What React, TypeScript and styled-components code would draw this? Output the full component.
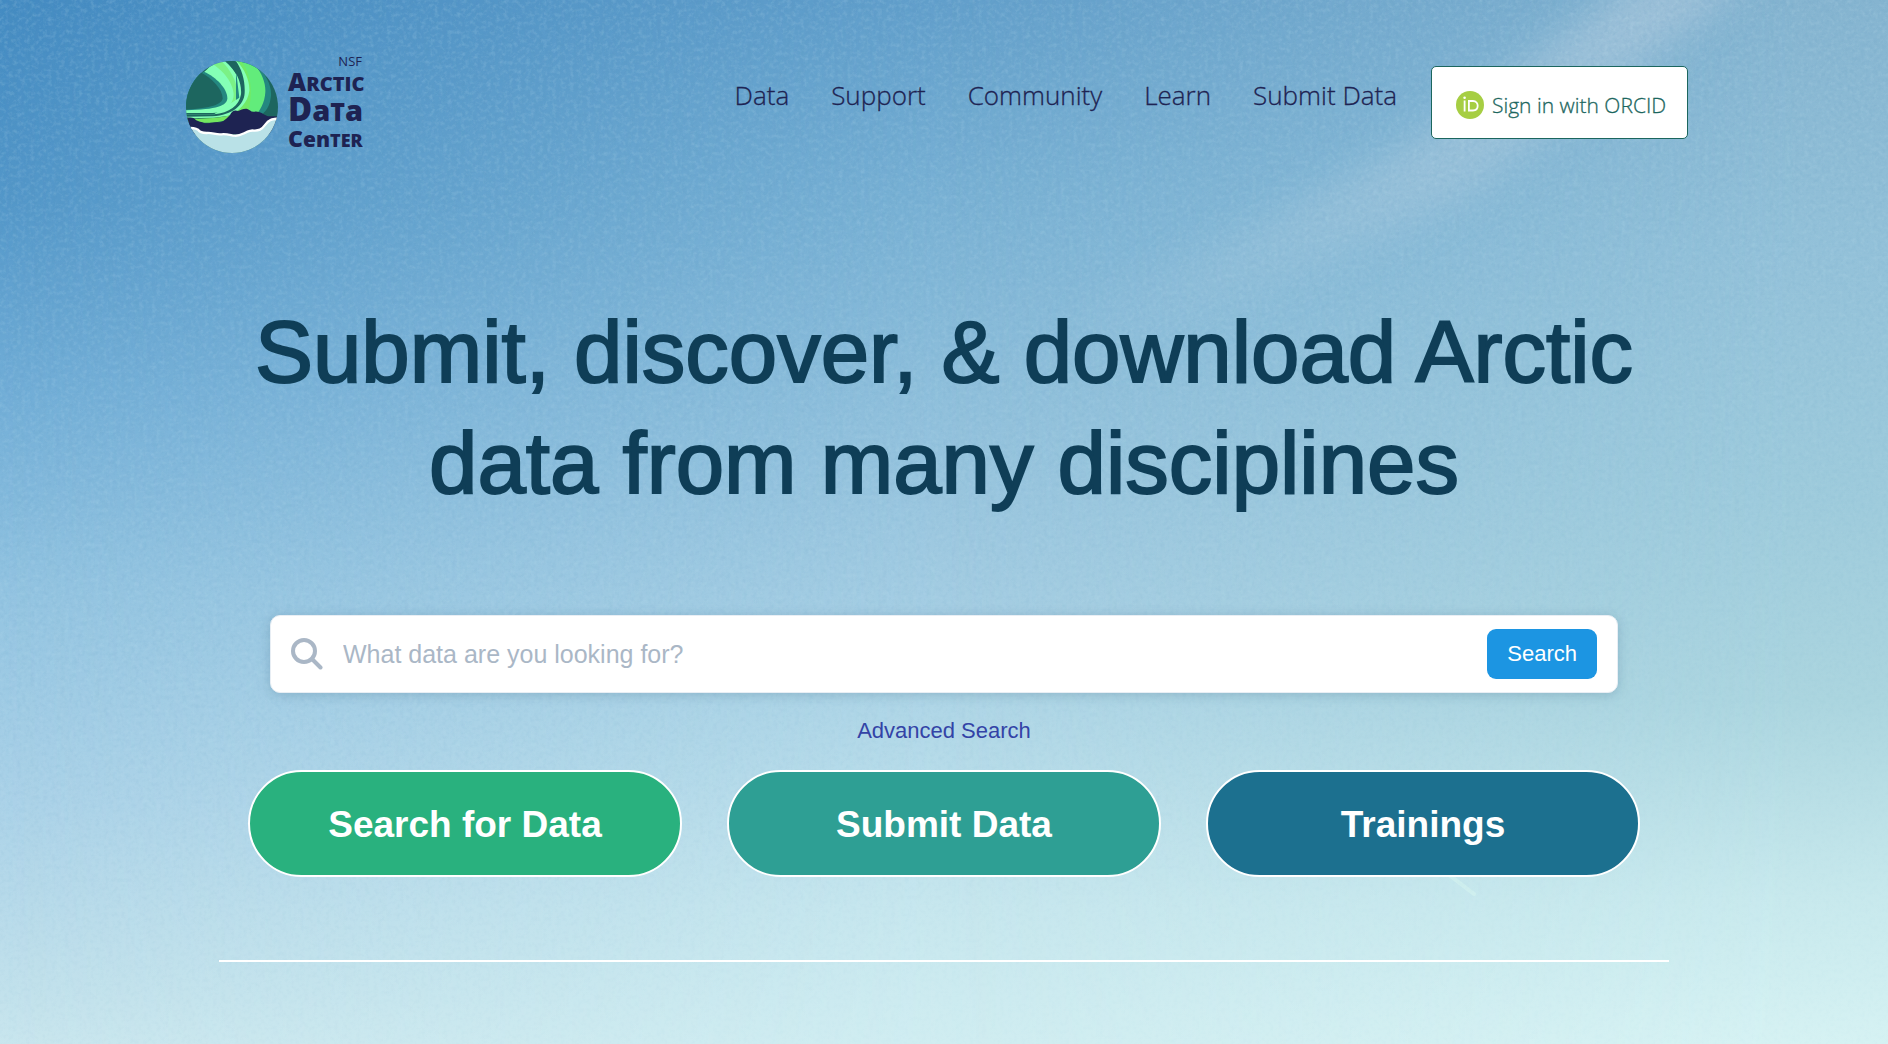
import React from "react";
import styled, { createGlobalStyle } from "styled-components";

const GlobalStyle = createGlobalStyle`
  *, *::before, *::after { box-sizing: border-box; }
  body {
    margin: 0;
    font-family: "Liberation Sans", Arial, Helvetica, sans-serif;
    background: #9ecbe2;
  }
`;

const Page = styled.div`
  position: relative;
  isolation: isolate;
  min-height: 100vh;
  padding-bottom: 40px;
  overflow: hidden;
`;

const Sky = styled.div`
  position: absolute;
  inset: 0;
  z-index: -1;
  background: linear-gradient(#448bc2, #5397c9 19%, #72aed7 38%, #93c4e1 57%, #abd2e8 77%, #c3e2ec 96%, #c9e6ee);

  &::before,
  &::after {
    content: "";
    position: absolute;
    inset: 0;
  }
  &::before {
    background: linear-gradient(#629fcb, #79b1d4 19%, #8fbfdb 38%, #a3cce2 57%, #b3d9e8 71%, #c7e7ee 87%, #d0edf1);
    mask-image: linear-gradient(90deg, transparent, #000 50%);
  }
  &::after {
    background: linear-gradient(#85b4d0, #93c1d9 24%, #9ecbdc 48%, #abd5df 67%, #c8e9ed 86%, #d6f2f3);
    mask-image: linear-gradient(90deg, transparent 50%, #000 95%);
  }
`;

const Texture = styled.svg`
  position: absolute;
  inset: 0;
  z-index: 1;
  width: 100%;
  height: 100%;
`;

const Header = styled.header`
  display: flex;
  align-items: flex-start;
  justify-content: space-between;
  max-width: 1516px;
  margin: 0 auto;
  padding: 52px 14px 0 0;
`;

const LogoLink = styled.a`
  display: block;
  svg { display: block; width: 184px; height: 102px; }
`;

const Nav = styled.nav`
  display: flex;
  align-items: flex-start;
  gap: 34px;
  padding-top: 14px;
  font-family: "Open Sans", "Noto Sans", sans-serif;
  font-weight: 300;
`;

const NavList = styled.ul`
  display: flex;
  gap: 42px;
  margin: 0;
  padding: 9px 0 0;
  list-style: none;
`;

const NavLink = styled.a`
  color: #1e2352;
  font-size: 26px;
  line-height: 40px;
  text-decoration: none;
  -webkit-text-stroke: 0.3px;
`;

const SignIn = styled.a`
  display: flex;
  align-items: center;
  gap: 8px;
  min-width: 257px;
  height: 73px;
  padding: 4px 18px 0 24px;
  border: 1px solid #1b665e;
  border-radius: 5px;
  background: #fff;
  color: #1b665e;
  font-size: 21px;
  line-height: 28px;
  text-decoration: none;
  -webkit-text-stroke: 0.3px;
  svg { width: 28px; height: 28px; }
`;

const Main = styled.main`
  max-width: 1450px;
  margin: 142px auto 0;
`;

const Title = styled.h1`
  margin: 0;
  color: #0f3e57;
  font-size: 87px;
  font-weight: 400;
  line-height: 111px;
  text-align: center;
  -webkit-text-stroke: 2px #0f3e57;
`;

const SearchForm = styled.form`
  display: flex;
  align-items: center;
  height: 78px;
  margin: 97px 51px 0;
  padding: 0 20px;
  border: 1px solid #e8eef4;
  border-radius: 10px;
  background: #fff;
  box-shadow: 0 2px 12px rgba(40, 80, 110, 0.22);
`;

const SearchLabel = styled.label`
  display: flex;
  color: #aab7c6;
  svg { width: 32px; height: 32px; }
`;

const SearchInput = styled.input`
  flex: 1;
  min-width: 0;
  height: 50px;
  padding: 0 20px;
  border: 0;
  outline: 0;
  background: transparent;
  color: #22313f;
  font: inherit;
  font-size: 25px;
  &::placeholder { color: #aab7c6; opacity: 1; }
`;

const SearchButton = styled.button`
  height: 50px;
  padding: 0 20px;
  border: 0;
  border-radius: 9px;
  background: #1c95e2;
  color: #fff;
  font: inherit;
  font-size: 22px;
`;

const AdvancedLink = styled.a`
  display: block;
  width: fit-content;
  margin: 23px auto 24px;
  color: #3343a6;
  font-size: 22px;
  line-height: 30px;
  text-decoration: none;
`;

const Actions = styled.div`
  display: grid;
  grid-template-columns: repeat(3, 1fr);
  gap: 45px;
  padding: 0 29px;
`;

const ActionLink = styled.a<{ $color: string }>`
  display: flex;
  align-items: center;
  justify-content: center;
  height: 107px;
  padding-top: 2px;
  border: 2px solid #fff;
  border-radius: 54px;
  background: ${(p) => p.$color};
  color: #fff;
  font-size: 37px;
  font-weight: 700;
  text-decoration: none;
`;

const Divider = styled.hr`
  height: 2px;
  margin: 83px 0 0;
  border: 0;
  background: #fff;
`;

const links = ["Data", "Support", "Community", "Learn", "Submit Data"];

const actions = [
  { label: "Search for Data", color: "#29b17e" },
  { label: "Submit Data", color: "#2e9f94" },
  { label: "Trainings", color: "#1c708f" },
];

function Logo() {
  return (
    <svg viewBox="0 0 184 102" role="img" aria-label="NSF Arctic Data Center">
      <defs>
        <clipPath id="globe"><circle cx="138" cy="138" r="138" /></clipPath>
      </defs>
      <g transform="translate(0 9) scale(.3333)">
        <g clipPath="url(#globe)">
          <rect width="276" height="276" fill="#1d665f" />
          <path d="M48 38 L62 26 C80 8 94 0 108 -6 C150 22 166 66 166 98 C164 132 130 152 80 156 L0 156 L0 146 Z" fill="#84ffb6" />
          <path d="M100 -5 C126 16 154 56 154 98 C152 128 132 142 104 150 C130 140 144 120 143 98 C140 60 106 24 78 8 Z" fill="#74e65f" opacity=".55" />
          <path d="M54 32 C90 48 124 82 124 112 C124 134 92 146 0 148 L0 60 Z" fill="#248880" />
          <path d="M44 34 C78 52 110 86 110 112 C108 130 76 142 0 146 L0 60 Z" fill="#1d665f" />
          <path d="M186 -4 C230 20 262 70 254 112 C250 150 220 172 190 178 L150 178 L150 -5 Z" fill="#248880" />
          <path d="M150 -5 L186 -5 C222 20 240 60 238 94 C236 130 218 156 196 178 L120 178 L170 130 Z" fill="#62ec7b" />
          <path d="M160 -5 C196 30 206 100 180 176 L130 176 L178 110 Z" fill="#77e95e" opacity=".7" />
          <path d="M146 -5 C176 20 192 60 190 90 C186 124 160 150 130 164 L84 170 L0 172 L0 160 L84 160 L160 110 Z" fill="#84ffb6" />
          <path d="M112 -5 C152 26 168 66 165 100 C160 134 130 156 84 160 L0 160 L0 167 L80 166 C140 162 174 132 176 96 C178 56 166 20 146 -5 Z" fill="#1d665f" />
          <path d="M0 172 C60 175 105 171 142 160 L132 178 L90 188 L0 182 Z" fill="#74e65f" />
          <path d="M40 184 C70 188 96 184 128 176 L120 190 L50 190 Z" fill="#1d665f" />
          <path d="M-4 168 C8 170 16 168 24 172 C32 182 44 182 54 186 C66 190 78 182 96 184 C110 186 122 172 132 162 C138 148 148 146 156 150 C166 148 172 142 184 144 C192 146 194 154 206 152 C222 150 230 160 242 164 C254 168 264 164 280 168 L280 220 L0 220 Z" fill="#1e2352" />
          <path d="M0 200 C14 200 26 200 36 206 C42 216 54 216 62 216 C78 214 90 222 106 220 C120 218 132 222 146 224 C162 226 176 214 192 210 C200 206 208 212 222 206 C236 200 240 182 252 178 C262 172 270 176 280 170 L280 280 L0 280 Z" fill="#b9e1e7" stroke="#fff" strokeWidth="7" />
        </g>
      </g>
      <g fill="#1e2352" fontFamily='"Open Sans", "Noto Sans", sans-serif' fontWeight="800">
        <text x="176" y="14" textAnchor="end" fontSize="13" fontWeight="400">NSF</text>
        <text x="102" y="39" fontSize="25">A<tspan fontSize="20">RCTIC</tspan></text>
        <text x="102" y="69" fontSize="33">D<tspan fontSize="29">a</tspan><tspan fontSize="25">T</tspan><tspan fontSize="29">a</tspan></text>
        <text x="102" y="95" fontSize="23">C<tspan fontSize="21">en</tspan><tspan fontSize="18">TER</tspan></text>
      </g>
    </svg>
  );
}

function OrcidIcon() {
  return (
    <svg viewBox="0 0 28 28" aria-hidden="true">
      <circle cx="14" cy="14" r="14" fill="#a6ce43" />
      <circle cx="8.6" cy="6.7" r="1.3" fill="#fff" />
      <path d="M8.6 9.6 V20.4 M12.9 10 H17 C20.2 10 21.7 12.4 21.7 14.8 C21.7 17.4 20 19.5 17 19.5 H12.9 Z" fill="none" stroke="#fff" strokeWidth="1.8" />
    </svg>
  );
}

function Backdrop() {
  return (
    <Sky aria-hidden="true">
      <Texture viewBox="0 0 1888 1044" preserveAspectRatio="none">
        <defs>
          <filter id="haze" x="-20%" y="-20%" width="140%" height="140%">
            <feGaussianBlur stdDeviation="18" />
          </filter>
          <filter id="grain" x="0" y="0" width="100%" height="100%">
            <feTurbulence type="fractalNoise" baseFrequency="0.23" numOctaves="3" seed="4" />
            <feColorMatrix values="0 0 0 0 0.1  0 0 0 0 0.3  0 0 0 0 0.5  1.6 0 0 0 -0.7" />
          </filter>
          <filter id="glint" x="0" y="0" width="100%" height="100%">
            <feTurbulence type="fractalNoise" baseFrequency="0.23" numOctaves="3" seed="11" />
            <feColorMatrix values="0 0 0 0 0.75  0 0 0 0 0.95  0 0 0 0 1  1.6 0 0 0 -0.7" />
          </filter>
          <linearGradient id="fade" x1="0" y1="0" x2="0.4" y2="1">
            <stop offset="0" stopColor="#fff" />
            <stop offset="0.6" stopColor="#888" />
            <stop offset="1" stopColor="#222" />
          </linearGradient>
          <mask id="grainMask"><rect width="1888" height="1044" fill="url(#fade)" /></mask>
          <linearGradient id="beam" x1="1" y1="0" x2="0" y2="1">
            <stop offset="0" stopColor="#adc8dd" stopOpacity="0.7" />
            <stop offset="0.5" stopColor="#a5c7dc" stopOpacity="0.55" />
            <stop offset="1" stopColor="#a3c9df" stopOpacity="0" />
          </linearGradient>
        </defs>
        <path d="M1640 -20 L1750 -20 L1460 200 L1090 370 L1070 320 L1400 150 Z" fill="url(#beam)" filter="url(#haze)" />
        <path d="M1440 868 L1474 894" stroke="#d5f4f0" strokeWidth="4" strokeLinecap="round" opacity="0.6" />
        <g mask="url(#grainMask)">
          <rect width="1888" height="1044" filter="url(#grain)" opacity="0.24" />
          <rect width="1888" height="1044" filter="url(#glint)" opacity="0.22" />
        </g>
      </Texture>
    </Sky>
  );
}

export default function App() {
  return (
    <Page>
      <GlobalStyle />
      <Backdrop />
      <Header>
        <LogoLink href="#"><Logo /></LogoLink>
        <Nav aria-label="Main">
          <NavList>
            {links.map((label) => (
              <li key={label}><NavLink href="#">{label}</NavLink></li>
            ))}
          </NavList>
          <SignIn href="#"><OrcidIcon />Sign in with ORCID</SignIn>
        </Nav>
      </Header>
      <Main>
        <Title>Submit, discover, &amp; download Arctic data from many disciplines</Title>
        <SearchForm role="search" onSubmit={(e) => e.preventDefault()}>
          <SearchLabel htmlFor="query" aria-label="Search data">
            <svg viewBox="0 0 32 32" fill="none" stroke="currentColor" strokeWidth="4" strokeLinecap="round" aria-hidden="true">
              <circle cx="13" cy="13" r="11" />
              <path d="M21 21 L29.5 29.5" />
            </svg>
          </SearchLabel>
          <SearchInput id="query" type="text" placeholder="What data are you looking for?" />
          <SearchButton type="submit">Search</SearchButton>
        </SearchForm>
        <AdvancedLink href="#">Advanced Search</AdvancedLink>
        <Actions>
          {actions.map((a) => (
            <ActionLink key={a.label} href="#" $color={a.color}>{a.label}</ActionLink>
          ))}
        </Actions>
        <Divider />
      </Main>
    </Page>
  );
}
